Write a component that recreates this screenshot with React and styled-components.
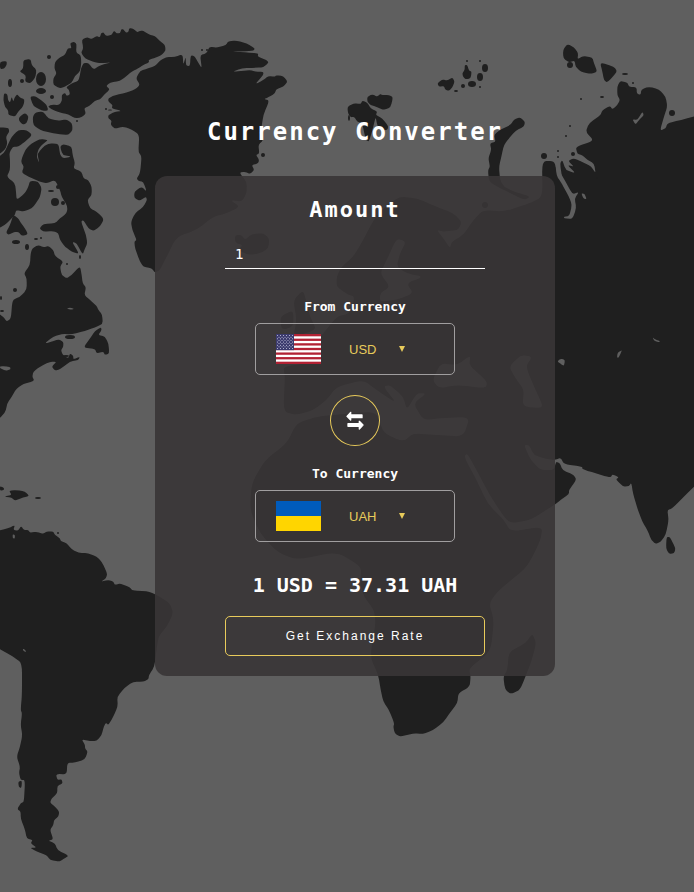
import React, { useState } from "react";
import styled, { createGlobalStyle } from "styled-components";

const GlobalStyle = createGlobalStyle`
  *, *::before, *::after { box-sizing: border-box; }
  body { margin: 0; background: #5f5f5f; }
`;

const MONO = '"DejaVu Sans Mono", "Liberation Mono", monospace';
const SANS = '"Liberation Sans", Arial, sans-serif';
const SEA = "#5f5f5f";
const LAND = "#1f1f1f";
const GOLD = "#e8cb5b";

const Page = styled.main`
  position: relative;
  z-index: 0;
  min-height: 100vh;
  padding: 116px 0 48px 16px;
  display: flex;
  flex-direction: column;
  align-items: center;
  gap: 28px;
  color: #fff;
  font-family: ${MONO};
`;

const MapBackdrop = styled.svg`
  position: absolute;
  inset: 0;
  z-index: -1;
  width: 100%;
  height: 100%;
  background: ${SEA};
`;

const Title = styled.h1`
  margin: 0;
  font-size: 24px;
  line-height: 32px;
  font-weight: 700;
  letter-spacing: 2px;
`;

const Card = styled.form`
  width: 100%;
  max-width: 400px;
  padding: 20px 70px;
  display: flex;
  flex-direction: column;
  align-items: center;
  border-radius: 12px;
  background: rgba(56, 53, 54, 0.9);
`;

const AmountLabel = styled.label`
  font-size: 22px;
  line-height: 28px;
  font-weight: 700;
  letter-spacing: 2px;
`;

const AmountInput = styled.input`
  width: 100%;
  height: 29px;
  margin: 16px 0 28px;
  padding: 0 10px;
  border: 0;
  border-bottom: 1px solid #fff;
  outline: 0;
  background: transparent;
  color: #fff;
  font: 14px ${MONO};
`;

const FieldLabel = styled.label`
  margin-bottom: 6px;
  font-size: 13px;
  line-height: 20px;
  font-weight: 700;
`;

const CurrencyBox = styled.div`
  width: 200px;
  height: 52px;
  padding: 0 20px;
  display: flex;
  align-items: center;
  border: 1px solid #a09e9f;
  border-radius: 5px;
`;

const Flag = styled.svg`
  width: 45px;
  height: 30px;
  margin-right: 28px;
`;

const CurrencySelect = styled.select`
  appearance: none;
  margin: 0;
  padding: 0;
  border: 0;
  outline: 0;
  background: transparent;
  color: ${GOLD};
  font: 13px ${SANS};
  cursor: pointer;

  option { background: #353333; }
`;

const Caret = styled.svg`
  width: 6px;
  height: 6px;
  margin-left: 22px;
  fill: ${GOLD};
`;

const SwapButton = styled.button`
  width: 50px;
  height: 51px;
  margin: 20px 0 18px;
  padding: 0;
  display: grid;
  place-items: center;
  border: 1px solid ${GOLD};
  border-radius: 50%;
  background: transparent;
  color: #fff;
  cursor: pointer;
`;

const SwapIcon = styled.svg`
  width: 18px;
  height: 19px;
  fill: currentColor;
  stroke: currentColor;
  stroke-width: 4;
  stroke-linejoin: round;
`;

const Rate = styled.output`
  margin: 31px 0 19px;
  font-size: 20px;
  line-height: 24px;
  font-weight: 700;
  white-space: nowrap;
`;

const SubmitButton = styled.button`
  width: 100%;
  height: 40px;
  border: 1px solid ${GOLD};
  border-radius: 5px;
  background: transparent;
  color: #fff;
  font: 12px ${SANS};
  letter-spacing: 2px;
  cursor: pointer;
`;

/* Coastlines are charted sheet by sheet: each run is [sheet x, sheet y, points],
   with the points in thirds of a map unit from the sheet's corner.
   Every corner is rounded off along a third of its two edges. */
const outline = (...runs) => {
  const pts = runs.flatMap(([ox, oy, text]) => {
    const n = text.trim().split(/\s+/).map(Number);
    const out = [];
    for (let i = 0; i < n.length; i += 2) out.push([ox + n[i] / 3, oy + n[i + 1] / 3]);
    return out;
  });
  const show = ([x, y]) => `${x.toFixed(1)} ${y.toFixed(1)}`;
  const toward = (a, b) => [a[0] + (b[0] - a[0]) / 3, a[1] + (b[1] - a[1]) / 3];
  const corners = pts.map((p, i) => {
    const before = pts[(i + pts.length - 1) % pts.length];
    const after = pts[(i + 1) % pts.length];
    return `${show(toward(p, before))}Q${show(p)} ${show(toward(p, after))}`;
  });
  return `M${corners.join("L")}Z`;
};

const LANDMASSES = [
  // Ellesmere
  outline([0, 0, "245 118 262 112 275 117 290 108 300 112 303 100 310 97 318 108 335 105 342 92 350 100 360 100 364 88 370 88 378 98 385 96 388 84 400 86 412 97 420 92 430 92 445 103 465 108 478 122 495 135 497 152 485 165 470 172 445 180 448 187 430 195 415 205 395 215 380 228 360 243 330 248 318 258 330 268 312 285 300 298 285 302 268 318 252 325 258 340 245 352 225 355 205 343 180 338 160 330 143 320 155 314 178 315 186 302 185 285 195 278 200 288 210 283 207 270 198 262 215 250 235 243 240 225 243 205 250 190 265 188 280 209 300 196 335 187 300 190 278 185 255 175 243 158 250 145"]),
  // Axel Heiberg
  outline([0, 0, "210 130 222 125 230 132 228 158 242 165 244 188 240 215 225 228 215 248 195 260 180 265 160 255 160 235 170 220 163 205 165 185 180 172 195 165 203 145 215 145"]),
  outline([0, 0, "0 185 20 183 20 195 12 206 0 207"]),
  outline([0, 0, "70 180 92 177 95 195 110 210 105 235 90 250 75 245 78 225 58 215 70 205"]),
  outline([0, 0, "12 280 22 282 24 300 30 308 35 290 40 305 45 290 52 283 60 293 74 298 70 318 55 335 45 350 25 345 25 332 15 320 10 300"]),
  outline([0, 0, "57 352 75 338 86 350 80 370 68 374 57 362"]),
  // Devon
  outline([0, 0, "90 290 105 288 125 302 140 315 145 332 125 332 100 318"]),
  outline([0, 0, "98 350 108 336 130 335 145 356 175 362 200 358 216 370 218 390 205 405 180 403 150 398 120 390 100 375"]),
  // Victoria and the mainland edge
  outline([0, 0, "-20 382 25 383 28 395 18 410 22 430 15 450 -20 475"]),
  outline([0, 0, "-20 480 12 460 25 432 35 410 55 390 80 390 97 405 75 425 55 440 38 440 28 460 30 480 30 510 20 530 45 550 48 575 50 600 75 580 85 560 90 542 115 545 125 565 120 590 108 610 95 625 70 635 48 630 45 645 30 660 15 675 -20 692"]),
  // Baffin
  outline([0, 0, "62 485 75 450 95 430 120 417 145 420 128 432 115 448 110 470 118 490 112 460 135 436 150 430 176 432 180 465 190 475 215 470 188 465 180 440 190 432 215 440 218 465 225 490 220 505 245 515 250 535 265 540 275 560 275 585 262 600 270 625 290 635 312 657 300 680 280 693 265 685 250 660 243 665 258 705 262 730 255 745 248 765 230 730 216 725 238 762 215 755 195 740 180 720 175 700 160 693 130 695 118 685 130 672 165 670 180 655 200 640 203 620 185 590 180 570 165 540 140 550 120 545 85 530 65 518 72 500"]),
  outline([0, 0, "18 697 30 675 40 645 55 655 62 668 75 685 84 703 65 708 55 695 40 697 25 705"]),
  // Quebec and Labrador
  outline([0, 200, "97 145 115 135 130 142 145 138 160 150 165 168 190 185 180 200 185 225 200 235 215 225 240 198 245 225 248 250 258 262 253 285 270 300 290 318 294 328 307 345 308 372 285 382 255 393 215 403 185 402 160 410 132 432 175 418 190 425 190 440 183 450 188 465 205 475 210 460 220 468 220 478 240 470 235 480 210 485 180 508 165 512 155 500 170 485 150 485 120 500 100 515 97 530 103 543 70 552 50 565 35 590 22 610 15 640 -20 670 -20 330 10 350 20 365 33 355 37 300 60 290 80 270 80 235 72 220 90 195 92 160"]),
  outline([0, 200, "250 443 270 415 285 393 303 382 305 390 295 405 315 410 325 430 328 460 315 465 310 455 290 460 285 447"]),
  // Hispaniola
  outline([0, 480, "12 50 35 45 27 32 50 30 75 35 88 48 70 52 45 62 35 53"]),
  outline([0, 480, "0 18 12 24 12 30 0 32"]),
  // South America
  outline([0, 480, "-20 155 25 145 45 135 40 150 55 152 63 138 72 150 85 150 90 158 110 155 130 162 140 154 160 155 165 165 180 175 182 183 200 190 215 208 235 218 265 220 290 230 305 245 322 280 318 295 303 305 325 300 340 305 345 315 360 310 390 322 397 332 440 333 465 342 510 370 520 400 500 440 475 470 468 520 463 560 447 585 445 598 430 605 400 605 375 622 352 650 353 680 340 710 325 735 318 728 312 738 305 765 290 783 270 783 245 778 255 795 255 805 263 815 255 838 225 848 202 848 200 883 168 882 172 900 185 898 188 910 172 918 172 940 155 955 150 968 165 980 178 995 175 1010 162 1020 160 1035 150 1050 160 1078 145 1082 165 1090 172 1110 207 1127 190 1137 178 1145 150 1140 140 1125 110 1115 90 1103 110 1103 92 1090 98 1080 80 1075 75 1050 62 1015 62 995 52 987 62 970 72 965 75 900 62 900 57 880 60 860 50 830 60 800 67 765 62 735 66 700 62 690 66 640 66 550 40 530 -20 497"]),
  outline([0, 480, "55 905 66 902 64 925 56 920"]),
  // Greenland
  outline([0, 0, "325 295 345 285 380 278 405 268 420 255 408 235 420 213 445 205 465 198 480 182 497 172 525 170 548 163 550 195 557 170 558 197 570 198 572 165 585 170 606 208 600 165 620 160 628 140 650 143 678 135 685 123 710 122 740 130 765 145 760 153 690 155 735 157 775 160 773 170 800 180 806 188 790 202 770 203 725 205 696 216 750 210 765 215 790 215 790 225 765 253 790 240 805 228 825 230 828 226 850 228 863 245 850 260 828 268 825 280 805 292 792 297 808 302 790 345 785 380 778 400 790 420 775 435 778 460 768 465 777 478 775 490 755 495 763 510 750 522 735 515 718 518 740 545 740 580 725 605 690 600 720 620 680 640 640 650 590 690 530 710 500 770 480 810 465 818 455 805 430 800 420 785 405 745 403 725 410 720 397 690 393 665 405 640 430 620 441 600 438 590 420 602 403 595 403 575 425 560 440 575 430 545 415 543 410 535 420 520 425 470 415 455 418 405 395 388 370 380 345 386 332 375 335 362 325 355 325 345 345 335 365 333 335 325 338 315 325 305"]),
  // Iceland
  outline([0, 0, "705 705 725 705 735 720 755 702 790 700 808 715 805 745 780 760 745 765 715 750 728 735 705 728"]),
  // Svalbard
  outline([344, 0, "10 320 30 310 50 312 55 302 70 308 80 325 100 335 95 345 115 355 133 378 130 390 115 390 100 378 95 350 88 380 75 425 65 420 55 370 40 365 30 350 20 352 12 340"]),
  outline([344, 0, "70 290 85 283 100 290 108 282 115 285 135 285 147 292 140 322 120 330 95 320 80 315 70 305"]),
  // Franz Josef Land
  outline([344, 0, "280 250 295 238 310 242 325 232 332 245 325 262 315 273 303 268 300 258 285 260"]),
  outline([344, 0, "355 220 362 210 362 195 370 195 375 212 383 215 380 235 365 238 357 230"]),
  // Novaya Zemlya
  outline([344, 0, "510 358 528 352 543 365 540 380 515 392 495 415 480 435 473 465 465 500 468 540 480 560 510 575 560 590 540 600 500 580 460 560 435 545 432 510 438 500 433 475 442 450 438 430 455 425 450 405 470 388 500 375"]),
  // Severnaya Zemlya
  outline([344, 0, "657 150 670 132 690 142 703 160 700 178 718 168 745 172 750 190 760 215 740 222 710 215 695 200 692 182 675 187 658 175"]),
  outline([344, 0, "768 187 810 200 820 215 790 248 780 240 775 215"]),
  // Eurasia and Africa
  outline(
    [344, 0, "820 260 828 243 850 247 855 260 878 262 878 280 890 285 892 268 915 260 945 268 965 290 970 320 960 350 948 392 965 385 970 370 1010 360 1070 344"],
    [344, 290, "1070 570 1010 630 985 655 970 660 974 690 965 735 950 755 935 762 922 750 910 720 895 695 880 655 867 610 862 578 855 588 838 590 815 568 825 562 805 553 800 563 715 538 715 530 660 522 650 503 633 510 600 505 570 495 555 465 540 465 560 510 590 540 630 540 636 515 648 520 655 540 690 555 697 570 675 600 675 612 650 630 633 643 560 690 500 700 480 680 440 620 400 545 370 490 360 500 400 575 430 640 480 690 500 725 595 710 590 750 550 830 490 880"],
    [344, 560, "460 95 435 130 450 180 440 275 375 325 380 350 377 380 343 400 340 430 320 455 300 485 265 512 235 522 210 520 168 530 152 520 148 500 151 490 135 450 118 425 110 390 103 345 78 290 95 190 90 150 60 110"],
    [150, 370, "630 640 635 590 560 545 440 570 380 545 330 490 300 420 305 340 345 270 410 220 440 160 500 140 600 130 680 125 700 190 760 215 790 190 860 195 940 200 960 140 870 145 820 150 790 100 830 70 800 70 770 120 760 80 720 45 700 50 740 100 680 60 640 30 560 50 530 90 490 120 440 135 400 125 405 20"],
    [150, 170, "400 590 470 580 480 540 520 490 560 440 600 430 615 380 590 372 560 350 560 320 575 290 610 260 640 210 670 150 710 105 750 80 800 85 860 110 910 130 935 155 925 180 880 185 860 180 880 205 900 235 905 215 940 195 970 150 1000 120 1060 125 1140 100 1178 80"],
    [344, 0, "594 483 630 483 638 510 655 540 648 490 655 480 665 510 695 520 670 495 690 500 672 482 690 475 720 488 742 500 755 520 750 490 730 480 715 465 700 462 695 440 750 422 725 395 735 370 770 345 775 330 798 318 805 328 820 315 828 300 820 285"]
  ),
  // Britain and Ireland
  outline([150, 170, "430 390 460 360 470 400 480 440 500 480 430 500 440 450"]),
  outline([150, 170, "390 440 430 420 430 470 395 480"]),
  // Madagascar and Sri Lanka
  outline([344, 560, "495 275 545 250 565 220 577 250 560 310 545 348 528 390 500 402 483 388 478 350 490 330"]),
  outline([344, 290, "968 740 978 742 995 775 990 790 975 792 966 775"]),
];

const WATERS = [
  // Gulf of Ob
  outline([344, 0, "634 490 650 520 665 545 685 583 705 576 692 595 697 625 685 657 660 655 660 650 676 648 684 615 675 590 650 545 638 528"]),
  outline([344, 0, "712 580 722 582 728 598 718 595"]),
  outline([344, 0, "865 358 880 360 895 335 900 345 885 360 875 374"]),
  // Baltic, Black, Caspian and Aral seas
  outline([150, 170, "740 205 768 215 750 250 740 290 770 310 820 320 770 340 790 370 740 390 690 395 690 370 720 350 690 310 710 270"]),
  outline([344, 290, "265 270 290 220 340 225 380 195 375 225 430 275 425 295 340 285 285 295"]),
  outline([344, 290, "495 230 530 195 565 200 545 230 575 300 600 355 535 350 540 300 515 265"]),
  outline([344, 290, "640 214 650 206 663 210 660 228 650 222"]),
  // Balkhash and Baikal
  outline([344, 290, "819 202 821 188 834 180 830 190 823 204"]),
  outline([344, 290, "926 142 933 148 948 153 945 157 930 152"]),
  // Quebec reservoirs
  outline([0, 200, "200 326 210 323 223 327 212 329"]),
  outline([0, 200, "0 498 30 500 32 508 18 512 0 505"]),
  outline([0, 480, "68 506 76 510 78 517 70 512"]),
  outline([0, 480, "38 163 45 165 44 176 38 174"]),
];

// Centre and radii of the small islands.
const ISLETS = [
  [41, 79, 5, 7], [41, 91, 5, 3], [49, 57, 2, 2], [52, 97, 2, 2], [22, 81, 2, 2], [10, 83, 2, 4],
  [55, 202, 4, 4], [63, 203, 2, 2], [16, 242, 4, 2], [27, 247, 2, 3], [36, 239, 2, 1], [41, 238, 1, 1],
  [51, 191, 3, 1], [58, 187, 2, 2], [15, 290, 2, 2], [2, 311, 2, 1], [1, 298, 1, 2], [67, 264, 1, 1],
  [80, 257, 1, 2], [70, 337, 5, 2], [66, 356, 3, 1], [38, 498, 3, 1], [58, 533, 1, 1],
  [263, 155, 2, 2], [207, 50, 1, 1], [202, 50, 1, 1], [106, 109, 1, 1], [110, 110, 2, 0.5], [77, 121, 1, 1],
  [480, 77, 3, 4], [485, 68, 3, 4], [472, 84, 4, 3], [456, 91, 2, 1], [463, 86, 2, 2], [480, 87, 1, 1],
  [480, 61, 1, 1], [467, 61, 1, 1], [349, 118, 1, 3], [570, 65, 3, 3], [625, 74, 3, 1], [633, 83, 1, 1],
  [544, 156, 3, 3], [573, 154, 2, 2], [558, 157, 1, 1], [558, 151, 1, 1], [672, 113, 3, 3], [602, 97, 2, 1],
  [581, 99, 1, 1], [570, 126, 1, 1], [566, 136, 1, 1], [597, 178, 1, 1], [485, 205, 3, 3],
];

function WorldMap() {
  return (
    <MapBackdrop viewBox="0 0 694 892" preserveAspectRatio="xMidYMid slice" aria-hidden="true">
      <g fill={LAND}>
        {LANDMASSES.map((d) => <path key={d} d={d} />)}
        {ISLETS.map(([x, y, rx, ry]) => <ellipse key={`${x}-${y}`} cx={x} cy={y} rx={rx} ry={ry} />)}
      </g>
      <g fill={SEA}>
        {WATERS.map((d) => <path key={d} d={d} />)}
      </g>
    </MapBackdrop>
  );
}

const STARS = [];
for (let row = 0; row < 9; row += 1) {
  for (let col = row % 2; col < 11; col += 2) STARS.push([1.5 + col * 1.5, 1.6 + row * 1.6]);
}

function CurrencyFlag({ code }) {
  if (code === "UAH") {
    return (
      <Flag viewBox="0 0 45 30" role="img" aria-label="Flag of Ukraine">
        <path fill="#005bbb" d="M0 0h45v15H0z" />
        <path fill="#ffd500" d="M0 15h45v15H0z" />
      </Flag>
    );
  }
  return (
    <Flag viewBox="0 0 45 30" role="img" aria-label="Flag of the United States">
      <path fill="#fff" d="M0 0h45v30H0z" />
      {[0, 2, 4, 6, 8, 10, 12].map((i) => (
        <rect key={i} y={(i * 30) / 13} width="45" height={30 / 13} fill="#b22234" />
      ))}
      <path fill="#3c3b6e" d="M0 0h18v16.15H0z" />
      {STARS.map(([x, y]) => <circle key={`${x}-${y}`} cx={x} cy={y} r="0.5" fill="#d5d5ea" />)}
    </Flag>
  );
}

function CurrencyField({ id, label, value, onChange }) {
  return (
    <>
      <FieldLabel htmlFor={id}>{label}</FieldLabel>
      <CurrencyBox>
        <CurrencyFlag code={value} />
        <CurrencySelect id={id} value={value} onChange={(e) => onChange(e.target.value)}>
          <option value="USD">USD</option>
          <option value="UAH">UAH</option>
        </CurrencySelect>
        <Caret viewBox="0 0 6 6" aria-hidden="true"><path d="M0 0h6L3 6z" /></Caret>
      </CurrencyBox>
    </>
  );
}

const UAH_PER = { USD: 37.31, UAH: 1 };

const quote = (amount, from, to) => {
  const total = (Number(amount) * UAH_PER[from]) / UAH_PER[to];
  return `${amount} ${from} = ${total.toFixed(2)} ${to}`;
};

export default function App() {
  const [amount, setAmount] = useState("1");
  const [from, setFrom] = useState("USD");
  const [to, setTo] = useState("UAH");
  const [result, setResult] = useState(quote("1", "USD", "UAH"));

  const swap = () => {
    setFrom(to);
    setTo(from);
  };

  const submit = (e) => {
    e.preventDefault();
    setResult(quote(amount, from, to));
  };

  return (
    <>
      <GlobalStyle />
      <Page>
        <WorldMap />
        <Title>Currency Converter</Title>
        <Card onSubmit={submit}>
          <AmountLabel htmlFor="amount">Amount</AmountLabel>
          <AmountInput
            id="amount"
            type="text"
            inputMode="decimal"
            value={amount}
            onChange={(e) => setAmount(e.target.value)}
          />
          <CurrencyField id="from" label="From Currency" value={from} onChange={setFrom} />
          <SwapButton type="button" onClick={swap} aria-label="Swap currencies">
            <SwapIcon viewBox="0 0 54 57" aria-hidden="true">
              <path d="M3 16 14 4V12H48V20H14V27Z" />
              <path d="M51 42 40 31V38H6V46H40V54Z" />
            </SwapIcon>
          </SwapButton>
          <CurrencyField id="to" label="To Currency" value={to} onChange={setTo} />
          <Rate htmlFor="amount from to">{result}</Rate>
          <SubmitButton type="submit">Get Exchange Rate</SubmitButton>
        </Card>
      </Page>
    </>
  );
}
